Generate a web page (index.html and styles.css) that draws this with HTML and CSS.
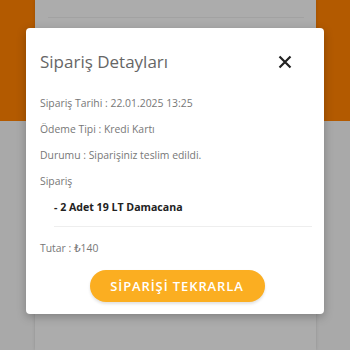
FILE: index.html
```html
<!DOCTYPE html>
<html lang="tr">
<head>
<meta charset="utf-8">
<link rel="stylesheet" href="styles.css">
</head>
<body>
<div class="page">
  <div class="band"></div>
  <div class="card"><div class="card-line"></div></div>
</div>
<div class="modal">
  <div class="modal-head">
    <h2 class="title">Sipariş Detayları</h2>
    <svg class="close" width="14" height="14" viewBox="0 0 14 14"><path d="M1.5 1.5L12.5 12.5M12.5 1.5L1.5 12.5" stroke="#222" stroke-width="2.2" stroke-linecap="butt"/></svg>
  </div>
  <div class="modal-body">
    <p class="row">Sipariş Tarihi : 22.01.2025 13:25</p>
    <p class="row">Ödeme Tipi : Kredi Kartı</p>
    <p class="row">Durumu : Siparişiniz teslim edildi.</p>
    <p class="row">Sipariş</p>
    <p class="item">- 2 Adet 19 LT Damacana</p>
    <div class="divider"></div>
    <p class="row total">Tutar : ₺140</p>
    <div class="actions"><button class="btn">SİPARİŞİ TEKRARLA</button></div>
  </div>
</div>
</body>
</html>
```
FILE: styles.css
```css
* { box-sizing: border-box; }
html, body { margin: 0; padding: 0; }
body {
  width: 350px;
  height: 350px;
  overflow: hidden;
  background: #a9a9a9;
  font-family: "Open Sans", "DejaVu Sans", sans-serif;
  position: relative;
}
.page { position: relative; height: 350px; }
.band { height: 121px; background: #b35a00; }
.card {
  position: absolute;
  left: 35px; top: 0;
  width: 281px; height: 350px;
  background: #acacac;
  box-shadow: 0 0 3px rgba(0,0,0,0.15);
  padding: 17px 12px 0 13px;
}
.card-line { height: 1px; background: #a2a2a2; }
.modal {
  position: absolute;
  left: 26px; top: 28px;
  width: 298px; height: 286px;
  background: #fff;
  border-radius: 4px;
  box-shadow: 0 3px 10px rgba(0,0,0,0.25);
  padding: 22px 12px 12px 14px;
  display: flex;
  flex-direction: column;
}
.modal-head {
  display: flex;
  align-items: center;
  justify-content: space-between;
  height: 24px;
  padding-right: 20px;
}
.title {
  margin: 0;
  font-size: 17px;
  font-weight: 400;
  color: #666;
  line-height: 24px;
}
.close { display: block; }
.modal-body { margin-top: 16px; display: flex; flex-direction: column; }
.row {
  margin: 0;
  font-size: 10.4px;
  line-height: 26px;
  color: #777;
}
.item {
  margin: 0;
  padding-left: 14px;
  font-size: 10.6px;
  line-height: 26px;
  font-weight: 700;
  color: #222;
}
.divider { height: 1px; background: #eee; margin: 6px 0 8px 14px; }
.actions { display: flex; justify-content: center; margin-top: 9px; padding-left: 2px; }
.btn {
  width: 175px; height: 32px;
  border: none;
  border-radius: 16px;
  background: #fbae21;
  color: #fff;
  font-family: inherit;
  font-size: 13px;
  font-weight: 600;
  letter-spacing: 0.9px;
  box-shadow: 0 2px 3px rgba(0,0,0,0.12);
}
```
